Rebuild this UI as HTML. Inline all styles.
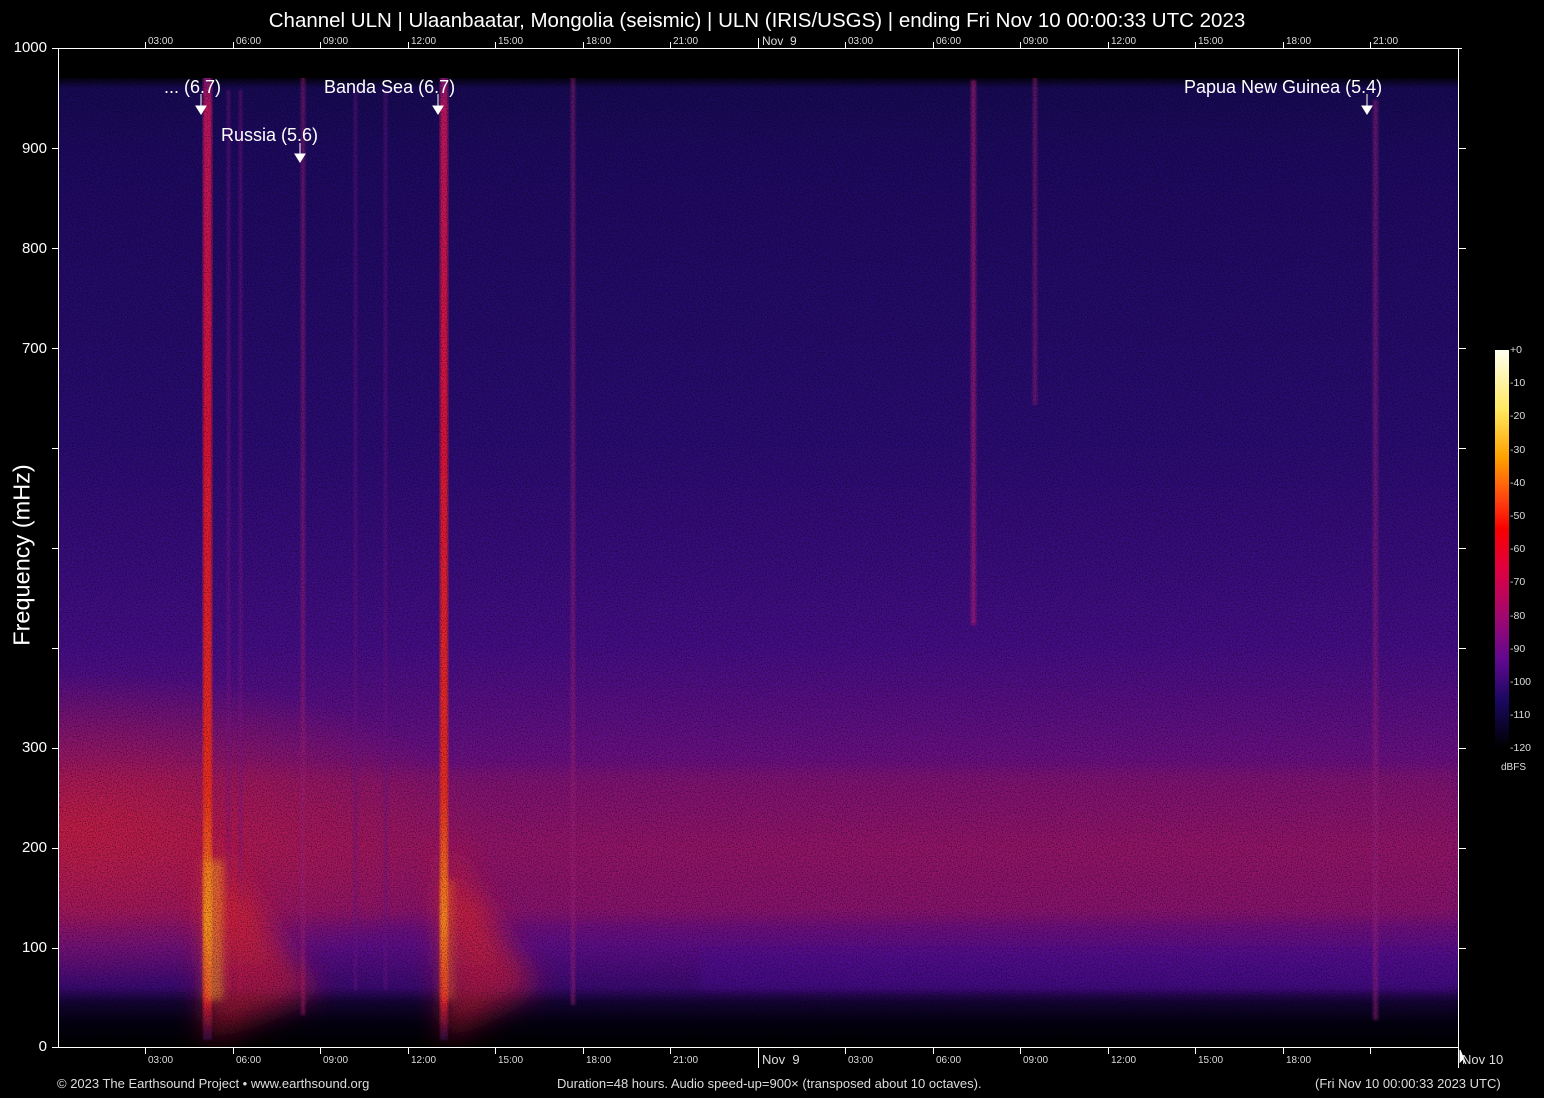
<!DOCTYPE html>
<html><head><meta charset="utf-8"><style>
html,body{margin:0;padding:0;background:#000;}
body{width:1544px;height:1098px;position:relative;overflow:hidden;font-family:"Liberation Sans",sans-serif;color:#fff;}
.t{position:absolute;white-space:nowrap;}
.sm{font-size:10px;color:#ddd;}
.yl{font-size:15px;text-align:right;width:47px;left:0;}
</style></head><body>
<svg width="1544" height="1098" style="position:absolute;left:0;top:0">
<defs>
<linearGradient id="bg" x1="0" y1="48" x2="0" y2="1047" gradientUnits="userSpaceOnUse">
<stop offset="0" stop-color="#000"/>
<stop offset="0.028" stop-color="#000"/>
<stop offset="0.04" stop-color="#180a56"/>
<stop offset="0.1" stop-color="#1e0a62"/>
<stop offset="0.4" stop-color="#2c0c76"/>
<stop offset="0.6" stop-color="#460e88"/>
<stop offset="0.7" stop-color="#681086"/>
<stop offset="0.8" stop-color="#8c1472"/>
<stop offset="0.86" stop-color="#801278"/>
<stop offset="0.9" stop-color="#5e0e8a"/>
<stop offset="0.94" stop-color="#3c0a74"/>
<stop offset="0.955" stop-color="#140436"/>
<stop offset="0.975" stop-color="#040112"/>
<stop offset="1" stop-color="#000"/>
</linearGradient>
<radialGradient id="leftred" cx="80" cy="830" r="260" gradientUnits="userSpaceOnUse" gradientTransform="translate(80 830) scale(1.6 0.6) translate(-80 -830)">
<stop offset="0" stop-color="#d02040" stop-opacity="0.85"/>
<stop offset="1" stop-color="#d02040" stop-opacity="0"/>
</radialGradient>
<linearGradient id="q" x1="0" y1="60" x2="0" y2="1040" gradientUnits="userSpaceOnUse">
<stop offset="0" stop-color="#601080"/>
<stop offset="0.05" stop-color="#c01860"/>
<stop offset="0.4" stop-color="#e01838"/>
<stop offset="0.75" stop-color="#f03020"/>
<stop offset="0.88" stop-color="#ff9020"/>
<stop offset="0.96" stop-color="#e02030"/>
<stop offset="1" stop-color="#300840"/>
</linearGradient>
<linearGradient id="fan" x1="0" y1="800" x2="0" y2="1030" gradientUnits="userSpaceOnUse">
<stop offset="0" stop-color="#e02030" stop-opacity="0"/>
<stop offset="0.5" stop-color="#f02828" stop-opacity="0.7"/>
<stop offset="1" stop-color="#d01838" stop-opacity="0.6"/>
</linearGradient>
<filter id="bl"><feGaussianBlur stdDeviation="6"/></filter>
<filter id="bl3" x="-50%" y="-20%" width="200%" height="140%"><feGaussianBlur stdDeviation="14"/></filter>
<filter id="bl4" x="-100%" y="-20%" width="300%" height="140%"><feGaussianBlur stdDeviation="4"/></filter>
<filter id="bl2"><feGaussianBlur stdDeviation="1.2"/></filter>
<filter id="noise" x="0" y="0" width="100%" height="100%">
<feTurbulence type="fractalNoise" baseFrequency="0.8" numOctaves="2" seed="3"/>
<feColorMatrix type="matrix" values="0 0 0 0 0  0 0 0 0 0  0 0 0 0 0  0 0 0 -3 1.7"/>
</filter>
<clipPath id="pc"><rect x="58" y="48" width="1400" height="999"/></clipPath>
</defs>
<g clip-path="url(#pc)">
<rect x="58" y="48" width="1400" height="999" fill="url(#bg)"/>
<rect x="58" y="600" width="700" height="400" fill="url(#leftred)"/>
<rect x="58" y="770" width="1400" height="150" fill="#c01c48" opacity="0.18" filter="url(#bl)"/>
<rect x="700" y="950" width="758" height="40" fill="#5010a0" opacity="0.4" filter="url(#bl)"/>
<g filter="url(#bl2)" opacity="0.55">
<rect x="301" y="75" width="4" height="940" fill="#a0207a"/>
<rect x="571" y="75" width="4" height="930" fill="#a0207a"/>
<rect x="971" y="80" width="5" height="545" fill="#d0207a"/>
<rect x="1033" y="75" width="4" height="330" fill="#a0207a"/>
<rect x="1373" y="100" width="5" height="920" fill="#9a2080"/>
<rect x="227" y="90" width="3" height="900" fill="#80188a"/>
<rect x="239" y="90" width="3" height="900" fill="#80188a"/>
<rect x="354" y="90" width="3" height="900" fill="#701888"/>
<rect x="384" y="90" width="3" height="900" fill="#701888"/>
</g>
<path d="M203 820 L216 820 Q250 920 320 990 L230 1030 L205 1040 Z" fill="url(#fan)" filter="url(#bl3)"/>
<path d="M440 840 L452 840 Q490 930 540 985 L460 1030 L443 1040 Z" fill="url(#fan)" filter="url(#bl3)"/>
<rect x="203" y="65" width="9" height="975" fill="url(#q)" filter="url(#bl2)"/>
<rect x="440" y="65" width="8" height="975" fill="url(#q)" filter="url(#bl2)"/>
<rect x="205" y="860" width="18" height="140" fill="#ffa020" opacity="0.55" filter="url(#bl4)"/>
<rect x="442" y="880" width="12" height="120" fill="#ff7020" opacity="0.45" filter="url(#bl4)"/>
<rect x="58" y="48" width="1400" height="999" filter="url(#noise)" opacity="0.45"/>
<rect x="58" y="48" width="1400" height="30" fill="#000"/>
</g>
<g stroke="#fff" stroke-width="1" fill="none">
<path d="M58.5 48 V1047.5 H1458 M58 48.5 H1458.5 V1047"/>
<path d="M1458.5 48 V1050 M1458 48.5 H1462"/>
<path d="M52 48.5H58 M52 148.5H58 M52 248.5H58 M52 348.5H58 M52 448.5H58 M52 548.5H58 M52 648.5H58 M52 748.5H58 M52 848.5H58 M52 948.5H58 M52 1047.5H58"/>
<path d="M1458 148.5H1466 M1458 248.5H1466 M1458 348.5H1466 M1458 448.5H1466 M1458 548.5H1466 M1458 648.5H1466 M1458 748.5H1466 M1458 848.5H1466 M1458 948.5H1466"/>
<path d="M145.5 42V48 M233.5 42V48 M320.5 42V48 M408.5 42V48 M495.5 42V48 M583.5 42V48 M670.5 42V48 M758.5 38V48 M845.5 42V48 M933.5 42V48 M1020.5 42V48 M1108.5 42V48 M1195.5 42V48 M1283.5 42V48 M1370.5 42V48"/>
<path d="M145.5 1047V1054 M233.5 1047V1054 M320.5 1047V1054 M408.5 1047V1054 M495.5 1047V1054 M583.5 1047V1054 M670.5 1047V1054 M758.5 1047V1068 M845.5 1047V1054 M933.5 1047V1054 M1020.5 1047V1054 M1108.5 1047V1054 M1195.5 1047V1054 M1283.5 1047V1054 M1370.5 1047V1054 M1458.5 1047V1068"/>
<path d="M1460 1050 L1460 1062 L1463 1059 L1466 1064 Z" fill="#fff"/>
</g>
<g stroke="#fff" fill="#fff">
<path d="M201 94V106" /><path d="M196 106H206L201 114Z"/>
<path d="M438 94V106" /><path d="M433 106H443L438 114Z"/>
<path d="M300 143V154" /><path d="M295 154H305L300 162Z"/>
<path d="M1367 94V106" /><path d="M1362 106H1372L1367 114Z"/>
</g>
<defs><linearGradient id="cb" x1="0" y1="350" x2="0" y2="748" gradientUnits="userSpaceOnUse">
<stop offset="0" stop-color="#fffff0"/>
<stop offset="0.15" stop-color="#ffe860"/>
<stop offset="0.27" stop-color="#ffa000"/>
<stop offset="0.38" stop-color="#ff4010"/>
<stop offset="0.45" stop-color="#f80000"/>
<stop offset="0.55" stop-color="#e00040"/>
<stop offset="0.67" stop-color="#a00870"/>
<stop offset="0.78" stop-color="#600890"/>
<stop offset="0.88" stop-color="#1a0860"/>
<stop offset="1" stop-color="#000"/>
</linearGradient></defs>
<rect x="1495" y="350" width="14" height="398" fill="url(#cb)"/>
</svg>
<div class="t" style="left:0;width:1514px;text-align:center;top:9px;font-size:20.5px;">Channel ULN | Ulaanbaatar, Mongolia (seismic) | ULN (IRIS/USGS) | ending Fri Nov 10 00:00:33 UTC 2023</div>
<div class="t yl" style="top:39px">1000</div>
<div class="t yl" style="top:140px">900</div>
<div class="t yl" style="top:240px">800</div>
<div class="t yl" style="top:340px">700</div>
<div class="t yl" style="top:739px">300</div>
<div class="t yl" style="top:839px">200</div>
<div class="t yl" style="top:939px">100</div>
<div class="t yl" style="top:1038px">0</div>
<div class="t" style="left:22px;top:555px;font-size:23.5px;transform:translate(-50%,-50%) rotate(-90deg);">Frequency (mHz)</div>
<div class="t sm" style="left:148px;top:36px">03:00</div><div class="t sm" style="left:236px;top:36px">06:00</div><div class="t sm" style="left:323px;top:36px">09:00</div><div class="t sm" style="left:411px;top:36px">12:00</div><div class="t sm" style="left:498px;top:36px">15:00</div><div class="t sm" style="left:586px;top:36px">18:00</div><div class="t sm" style="left:673px;top:36px">21:00</div><div class="t" style="left:762px;top:34px;font-size:12px;color:#ddd">Nov&nbsp; 9</div><div class="t sm" style="left:848px;top:36px">03:00</div><div class="t sm" style="left:936px;top:36px">06:00</div><div class="t sm" style="left:1023px;top:36px">09:00</div><div class="t sm" style="left:1111px;top:36px">12:00</div><div class="t sm" style="left:1198px;top:36px">15:00</div><div class="t sm" style="left:1286px;top:36px">18:00</div><div class="t sm" style="left:1373px;top:36px">21:00</div>
<div class="t sm" style="left:148px;top:1055px">03:00</div><div class="t sm" style="left:236px;top:1055px">06:00</div><div class="t sm" style="left:323px;top:1055px">09:00</div><div class="t sm" style="left:411px;top:1055px">12:00</div><div class="t sm" style="left:498px;top:1055px">15:00</div><div class="t sm" style="left:586px;top:1055px">18:00</div><div class="t sm" style="left:673px;top:1055px">21:00</div><div class="t" style="left:762px;top:1052px;font-size:13px;color:#ddd">Nov&nbsp; 9</div><div class="t sm" style="left:848px;top:1055px">03:00</div><div class="t sm" style="left:936px;top:1055px">06:00</div><div class="t sm" style="left:1023px;top:1055px">09:00</div><div class="t sm" style="left:1111px;top:1055px">12:00</div><div class="t sm" style="left:1198px;top:1055px">15:00</div><div class="t sm" style="left:1286px;top:1055px">18:00</div><div class="t" style="left:1462px;top:1052px;font-size:13px;color:#ddd">Nov 10</div>
<div class="t" style="left:164px;top:77px;font-size:18px">... (6.7)</div>
<div class="t" style="left:324px;top:77px;font-size:18px">Banda Sea (6.7)</div>
<div class="t" style="left:221px;top:125px;font-size:18px">Russia (5.6)</div>
<div class="t" style="left:1184px;top:77px;font-size:18px">Papua New Guinea (5.4)</div>
<div class="t" style="left:57px;top:1076px;font-size:13px;color:#ddd">© 2023 The Earthsound Project • www.earthsound.org</div>
<div class="t" style="left:557px;top:1076px;font-size:13px;color:#ddd">Duration=48 hours. Audio speed-up=900× (transposed about 10 octaves).</div>
<div class="t" style="left:1315px;top:1076px;font-size:13px;color:#ddd">(Fri Nov 10 00:00:33 2023 UTC)</div>
<div class="t" style="left:1510px;top:334px;font-size:10.5px;color:#ddd;line-height:33.2px">+0<br>-10<br>-20<br>-30<br>-40<br>-50<br>-60<br>-70<br>-80<br>-90<br>-100<br>-110<br>-120</div>
<div class="t" style="left:1501px;top:762px;font-size:10px;color:#ddd">dBFS</div>
</body></html>
